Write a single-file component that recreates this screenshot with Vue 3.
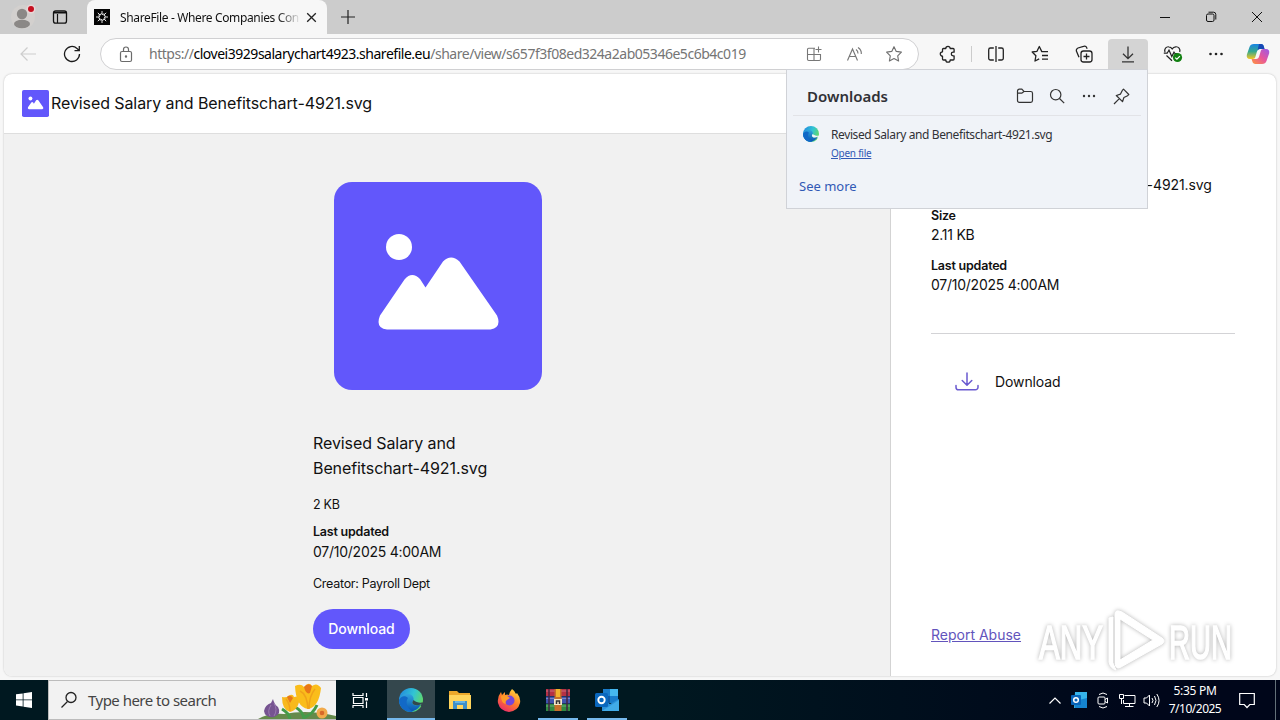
<script setup>
const fileName = 'Revised Salary and Benefitschart-4921.svg'
const updated = '07/10/2025 4:00AM'
</script>

<template>
  <div class="screen">
    <!-- Tab strip -->
    <div class="tabs">
      <div class="profile">
        <svg width="34" height="34" viewBox="0 0 34 34">
          <circle cx="17" cy="17" r="12" fill="#d3d0ce" />
          <circle cx="16" cy="14" r="5.2" fill="#8b8886" />
          <ellipse cx="16" cy="24" rx="8" ry="4.2" fill="#8b8886" />
          <circle cx="25" cy="9" r="4.500" fill="#e9d5d5" />
          <circle cx="25" cy="9" r="3" fill="#c50f1f" />
        </svg>
      </div>
      <div class="workspaces">
        <svg width="16" height="16" viewBox="0 0 16 16" fill="none" stroke="#111">
          <rect x="1.500" y="1.800" width="13" height="12.400" rx="2.200" stroke-width="1.300" />
          <path d="M2 3.500h12" stroke-width="2" />
          <path d="M5.500 5v9" stroke-width="1.200" />
        </svg>
      </div>
      <div class="tab">
        <svg width="16" height="16" viewBox="0 0 16 16">
          <rect width="16" height="16" fill="#050505" />
          <g fill="none" stroke="#fff" stroke-width=".9">
            <path d="M8 2v3.500l2.300-.6M12.200 3.800 9.800 6.200l2 1.200M14 8h-3.500l.6 2.300M12.200 12.200 9.800 9.800l-1.200 2M8 14v-3.500l-2.300.6M3.800 12.200l2.400-2.400-2-1.200M2 8h3.500l-.6-2.300M3.800 3.800l2.400 2.400 1.200-2" />
          </g>
        </svg>
        <span class="tab-title">ShareFile - Where Companies Con</span>
        <svg width="11" height="11" viewBox="0 0 11 11"><path d="M1.200 1.200l8.600 8.600M9.800 1.200 1.200 9.800" stroke="#222" stroke-width="1.300" /></svg>
      </div>
      <div class="new-tab">
        <svg width="14" height="14" viewBox="0 0 14 14"><path d="M7 0v14M0 7h14" stroke="#222" stroke-width="1.200" /></svg>
      </div>
      <div class="window-buttons">
        <div><svg width="12" height="12" viewBox="0 0 12 12"><path d="M1 6.500h10" stroke="#111" /></svg></div>
        <div>
          <svg width="12" height="12" viewBox="0 0 12 12" fill="none" stroke="#111">
            <rect x="1.500" y="3" width="7.500" height="7.500" rx="1.500" />
            <path d="M3.500 1.200h5a2.300 2.300 0 0 1 2.300 2.300v5" />
          </svg>
        </div>
        <div><svg width="12" height="12" viewBox="0 0 12 12"><path d="M1 1l10 10M11 1 1 11" stroke="#111" /></svg></div>
      </div>
    </div>

    <!-- Toolbar -->
    <div class="toolbar">
      <div class="tool">
        <svg width="18" height="18" viewBox="0 0 18 18" fill="none" stroke="#cdcdcd" stroke-width="1.200"><path d="M17 9H2M8.500 2.500 2 9l6.500 6.500" /></svg>
      </div>
      <div class="tool">
        <svg width="18" height="18" viewBox="0 0 18 18" fill="none" stroke="#1b1b1b" stroke-width="1.300"><path d="M16.500 9A7.500 7.500 0 1 1 14 3.400l1.800 1.900M16.300 1v4.600h-4.800" /></svg>
      </div>
      <div class="address">
        <svg class="lock" width="14" height="17" viewBox="0 0 14 17" fill="none" stroke="#6b6b6b" stroke-width="1.200">
          <rect x="1.500" y="5.500" width="11" height="10" rx="1.500" />
          <path d="M4.500 5.500V3.500a2.500 2.500 0 0 1 5 0v2" />
          <circle cx="7" cy="10.500" r=".6" fill="#6b6b6b" />
        </svg>
        <span class="url">https://<b>clovei3929salarychart4923.sharefile.eu</b>/share/view/s657f3f08ed324a2ab05346e5c6b4c019</span>
        <div class="address-icons">
          <div>
            <svg width="16" height="16" viewBox="0 0 16 16" fill="none" stroke="#777" stroke-width="1.100">
              <path d="M9 2.200H2.700A1.200 1.200 0 0 0 1.500 3.400v9.900a1.200 1.200 0 0 0 1.200 1.200h10.600a1.200 1.200 0 0 0 1.200-1.200V8.500h-13M8 2.200v12.300M12.500.5v6M9.500 3.500h6" />
            </svg>
          </div>
          <div>
            <svg width="17" height="16" viewBox="0 0 17 16" fill="none" stroke="#777" stroke-width="1.150">
              <path d="M1.500 14.500 6.500 3l5 11.500M3.200 10.500h6.600M10 3.500a4.500 4.500 0 0 1 2 4M12 1.500a7 7 0 0 1 3.300 6.500" />
            </svg>
          </div>
          <div>
            <svg width="18" height="18" viewBox="0 0 18 18" fill="none" stroke="#707070" stroke-width="1.150" stroke-linejoin="round">
              <path d="m9 1.700 2.250 4.700 5.150.75-3.700 3.650.9 5.200L9 13.500 4.400 16l.9-5.200L1.600 7.150l5.150-.75z" />
            </svg>
          </div>
        </div>
      </div>
      <div class="tools">
        <div class="tool">
          <svg width="18" height="18" viewBox="0 0 18 18" fill="none" stroke="#222" stroke-width="1.300" stroke-linejoin="round">
            <path d="M4.500 3.500h2.300a2.200 2.200 0 0 1 4.400 0h2.900a1 1 0 0 1 1 1v2.700h-1a1.800 1.800 0 0 0 0 3.600h1v3.200a1 1 0 0 1-1 1h-2.900a2.200 2.200 0 0 1-4.400 0H4.500a1 1 0 0 1-1-1v-2.800a2.200 2.200 0 0 1 0-4.400V4.500a1 1 0 0 1 1-1z" />
          </svg>
        </div>
        <i class="divider"></i>
        <div class="tool">
          <svg width="18" height="18" viewBox="0 0 18 18" fill="none" stroke="#222" stroke-width="1.300">
            <path d="M6.800 3H3.500A1.800 1.800 0 0 0 1.700 4.800v8.400A1.800 1.800 0 0 0 3.500 15h3.300M11.200 3h3.300a1.800 1.800 0 0 1 1.800 1.800v8.400a1.800 1.800 0 0 1-1.800 1.800h-3.300M9 1v16" />
          </svg>
        </div>
        <div class="tool">
          <svg width="18" height="18" viewBox="0 0 18 18" fill="none" stroke="#222" stroke-width="1.300" stroke-linejoin="round">
            <path d="M17 6.600h-6.200L8.300 1.500 6 6.300 1.200 7l3.700 3.700-.9 5.300 4.200-2.200M11 10.500h6M11 14.200h6" />
          </svg>
        </div>
        <div class="tool">
          <svg width="18" height="18" viewBox="0 0 18 18" fill="none" stroke="#222" stroke-width="1.300">
            <rect x="6" y="6" width="11" height="11" rx="2.500" />
            <path d="M11.500 8.500v6M8.500 11.500h6M4 12.200 1.600 6.500A2.600 2.600 0 0 1 3 3l5.500-1.700a2.600 2.600 0 0 1 3.300 1.600l.3.900" />
          </svg>
        </div>
        <div class="tool active">
          <svg width="18" height="18" viewBox="0 0 18 18" fill="none" stroke="#333" stroke-width="1.300"><path d="M9 1.500v12M4 8.700l5 5 5-5M3 16.800h12" /></svg>
        </div>
        <div class="tool heart">
          <svg width="20" height="18" viewBox="0 0 20 18" fill="none" stroke="#222" stroke-width="1.200">
            <path d="M2 7C.9 4 3.200 1.500 5.800 1.800 8 2 9.200 3.800 9.200 3.800s1.200-1.800 3.500-2c2.800-.3 4.900 2.300 4 5.200M.8 8.200h3.400L6 5l2.800 6.500L11 7.200l1 1.300h2M3.500 10.500 9 15.800" />
            <circle cx="14.500" cy="12.500" r="4.600" fill="#128112" stroke="none" />
            <path d="m12.200 12.600 1.700 1.600 3-3.100" stroke="#fff" />
          </svg>
        </div>
        <div class="tool">
          <svg width="16" height="4" viewBox="0 0 16 4" fill="#222"><circle cx="2.500" cy="2" r="1.300" /><circle cx="8" cy="2" r="1.300" /><circle cx="13.500" cy="2" r="1.300" /></svg>
        </div>
        <div class="tool copilot">
          <svg width="24" height="22" viewBox="0 0 24 22">
            <defs>
              <linearGradient id="cpA" x1="0" y1="0" x2="0" y2="1"><stop offset="0" stop-color="#1783e4" /><stop offset=".5" stop-color="#36a98d" /><stop offset="1" stop-color="#f7c620" /></linearGradient>
              <linearGradient id="cpB" x1="1" y1="0" x2="0" y2="1"><stop offset="0" stop-color="#9a5be8" /><stop offset=".5" stop-color="#e7569b" /><stop offset="1" stop-color="#ff963c" /></linearGradient>
            </defs>
            <path d="M8 1h7c1.800 0 2.400 1 2.900 2.700L18.500 6H14c-2 0-2.600 1-3.200 3l-1.300 4.600C9 15.400 8 16 6.500 16H4c-2.600 0-3.800-2-3.100-4.600L3.500 4C4.200 2 5.500 1 8 1z" fill="url(#cpA)" />
            <path d="M16 21H9.500c-1.800 0-2.700-1-3.200-2.700L5.600 16H10c2 0 2.700-1 3.300-3l1.300-4.500C15.100 6.700 16 6 17.500 6H20c2.600 0 3.800 2 3.100 4.600L20.500 18c-.7 2-2 3-4.500 3z" fill="url(#cpB)" />
            <path d="M15 1c1.800 0 2.400 1 2.900 2.700l.6 2.300h-4c-1.500 0-2.500.3-3.200 2.200L13 1z" fill="#1748b5" />
          </svg>
        </div>
      </div>
    </div>

    <!-- Web page -->
    <div class="page">
      <div class="left">
        <header class="file-header">
          <svg width="27" height="27" viewBox="0 0 208 208">
            <rect width="208" height="208" rx="14" fill="#6257fb" />
            <circle cx="65" cy="65" r="15" fill="#fff" />
            <path d="M46 133.500 70.500 97.500Q78 89 86 97l5.500 8.500L109 79.500Q117 71.500 125.500 79.500L163 133.500Q168 145 156.500 147.500H53Q41 146 46 133.500z" fill="#fff" />
          </svg>
          <span class="file-title">{{ fileName }}</span>
        </header>
        <main class="preview">
          <svg class="preview-icon" width="208" height="208" viewBox="0 0 208 208">
            <rect width="208" height="208" rx="18" fill="#6257fb" />
            <circle cx="65" cy="65" r="13" fill="#fff" />
            <path d="M46 133.500 70.500 97.500Q78 89 86 97l5.500 8.500L109 79.500Q117 71.500 125.500 79.500L163 133.500Q168 145 156.500 147.500H53Q41 146 46 133.500z" fill="#fff" />
          </svg>
          <div class="preview-name">Revised Salary and<br /><span>Benefitschart-4921.svg</span></div>
          <div class="small size">2 KB</div>
          <div class="label">Last updated</div>
          <div class="value">{{ updated }}</div>
          <div class="small creator">Creator: Payroll Dept</div>
          <button class="download">Download</button>
        </main>
      </div>
      <aside class="details">
        <div class="value name">{{ fileName }}</div>
        <div class="label">Size</div>
        <div class="value kb">2.11 KB</div>
        <div class="label">Last updated</div>
        <div class="value">{{ updated }}</div>
        <hr />
        <div class="action">
          <svg width="24" height="19" viewBox="0 0 24 19" fill="none" stroke="#6a5ad0" stroke-width="1.500" stroke-linecap="round" stroke-linejoin="round">
            <path d="M12 1v12M7.200 8.500 12 13.200l4.800-4.700M1 13.500v1.700a2.600 2.600 0 0 0 2.600 2.600h16.800a2.600 2.600 0 0 0 2.600-2.600v-1.700" />
          </svg>
          <span>Download</span>
        </div>
        <a class="report">Report Abuse</a>
      </aside>
    </div>

    <!-- Downloads flyout -->
    <div class="flyout">
      <div class="flyout-head">
        <span>Downloads</span>
        <div class="flyout-icons">
          <div><svg width="18" height="16" viewBox="0 0 18 16" fill="none" stroke="#333" stroke-width="1.200"><path d="M1.500 4.500V3A1.800 1.800 0 0 1 3.300 1.200h2.500L8 3.500h6.700a1.800 1.800 0 0 1 1.800 1.800v7.200a1.800 1.800 0 0 1-1.800 1.800H3.300a1.800 1.800 0 0 1-1.800-1.800zM1.500 5.200h4.300L8 3.500" /></svg></div>
          <div><svg width="16" height="16" viewBox="0 0 16 16" fill="none" stroke="#333" stroke-width="1.200"><circle cx="6.700" cy="6.700" r="5.200" /><path d="m10.500 10.500 4.700 4.700" /></svg></div>
          <div><svg width="14" height="4" viewBox="0 0 14 4" fill="#333"><circle cx="2" cy="2" r="1.200" /><circle cx="7" cy="2" r="1.200" /><circle cx="12" cy="2" r="1.200" /></svg></div>
          <div><svg width="17" height="17" viewBox="0 0 17 17" fill="none" stroke="#333" stroke-width="1.200" stroke-linejoin="round"><path d="m10.500 1.200 5.300 5.300-1.200 1.200-3.700 1.800-1.400 4.200-6.200-6.200 4.200-1.400 1.800-3.700zM6.300 10.700 1 16" /></svg></div>
        </div>
      </div>
      <div class="download-item">
        <svg width="16" height="16" viewBox="0 0 24 24">
          <circle cx="12" cy="12" r="12" fill="url(#edgeA)" />
          <path d="M0 12C1 7 6 5 10 6c4 .8 5 4 4.500 6-1 2-2 3 0 4.500 2 1.300 5 1 7.500-.2C19 23 10 26 4 21c-3-3-4-6-4-9z" fill="url(#edgeB)" />
          <path d="M9 10c-3 4-1 11 5 13.700C7 25 0 19 0 12c2-4 6-5 9-2z" fill="#1269c7" />
          <path d="M14.500 12c-1 2-2 3 0 4.500 2.200 1.400 5.500.8 8-.8l-1 2.300 2 1 1-5c-3 1.500-7 .5-10-2z" fill="#f0f3f8" />
        </svg>
        <div>
          <div class="item-name">{{ fileName }}</div>
          <a class="open">Open file</a>
        </div>
      </div>
      <a class="more">See more</a>
    </div>

    <!-- Watermark -->
    <svg class="watermark" width="220" height="68" viewBox="0 0 220 68">
      <g fill="#fff" stroke="#fff">
        <g font-family="Liberation Sans" font-size="49" stroke-width="1.600">
          <text x="4" y="51" textLength="64" lengthAdjust="spacingAndGlyphs">ANY</text>
          <text x="134" y="51" textLength="63" lengthAdjust="spacingAndGlyphs">RUN</text>
        </g>
        <path d="M84 3q-4-1-4 4v49q1 6 6 3l41-23q4-3 0-6L87 4zM85 11l33 21-33 20z" fill-rule="evenodd" />
        <path d="M74 10v44q1 6 7 8l-3-7V9z" />
      </g>
    </svg>

    <!-- Taskbar -->
    <div class="taskbar">
      <div class="start">
        <svg width="16" height="16" viewBox="0 0 16 16" fill="#fff"><path d="M0 2.300 6.700 1.400v6.100H0zM7.500 1.200 16 0v7.500H7.500zM0 8.300h6.700v6.200L0 13.600zM7.500 8.300H16V16l-8.500-1.200z" /></svg>
      </div>
      <div class="search">
        <svg width="18" height="18" viewBox="0 0 18 18" fill="none" stroke="#222" stroke-width="1.300"><circle cx="11" cy="6.500" r="5" /><path d="M7.500 10.500 1.500 16.500" /></svg>
        <span>Type here to search</span>
        <svg class="flowers" width="78" height="38" viewBox="0 0 78 38">
          <path d="M0 38Q10 32 26 33 50 28 78 35v3z" fill="#658a4b" />
          <path d="M32 38Q31 32 24 28M46 38q-1-8-9-12M47 36q8-3 12-12" stroke="#449b48" stroke-width="3" fill="none" />
          <path d="M15 18q1 5 5 8 4 7-4 10-9 1-10-6 1-6 7-8z" fill="#765391" />
          <path d="M13 24q-4 6-1 11M16 22q4 7 0 13" stroke="#9a7ab0" fill="none" />
          <path d="M24 16q5 1 6-1 5-3 6 1l6-1q-1 14-10 16-8-2-8-15z" fill="#f8b91d" />
          <path d="M37 5q6-3 9 1 5-6 8-1 5-4 9 2-2 19-13 21-12-2-13-23z" fill="#fabd1b" />
          <path d="M42 10q7 3 8 18M57 8q-6 7-6 20M28 18q4 5 4 12" stroke="#f0a21a" stroke-width="1.500" fill="none" />
          <path d="M46 6q4-5 8-1l-2 7q-4 2-6-6zM29 16q3-3 6 1l-3 5z" fill="#e87719" />
          <circle cx="64" cy="32" r="5.500" fill="#f2aa4b" /><circle cx="64" cy="32" r="2.300" fill="#d7682a" />
        </svg>
      </div>
      <div class="task-icon">
        <svg width="17" height="17" viewBox="0 0 17 17" fill="none" stroke="#fff" stroke-width="1.200"><path d="M1 1v2.500h10V1M1 16v-2.500h10V16M1.500 5.500h9.500v6H1.500zM14.500 1v4M14.500 9.500V16" /><path d="M13 7.300h3" stroke-width="2.500" /></svg>
      </div>
      <div class="task-icon current">
        <svg width="24" height="24" viewBox="0 0 24 24">
          <defs>
            <linearGradient id="edgeA" x1="0" y1=".3" x2="1" y2=".7"><stop offset="0" stop-color="#238ddd" /><stop offset=".5" stop-color="#31c4d4" /><stop offset="1" stop-color="#69dc58" /></linearGradient>
            <linearGradient id="edgeB" x1="0" y1="0" x2="0" y2="1"><stop offset="0" stop-color="#31a5df" /><stop offset="1" stop-color="#0754b1" /></linearGradient>
          </defs>
          <circle cx="12" cy="12" r="12" fill="url(#edgeA)" />
          <path d="M0 12C1 7 6 5 10 6c4 .8 5 4 4.500 6-1 2-2 3 0 4.500 2 1.300 5 1 7.500-.2C19 23 10 26 4 21c-3-3-4-6-4-9z" fill="url(#edgeB)" />
          <path d="M9 10c-3 4-1 11 5 13.700C7 25 0 19 0 12c2-4 6-5 9-2z" fill="#1269c7" />
          <path d="M14.500 12c-1 2-2 3 0 4.500 2.200 1.400 5.500.8 8-.8l-1 2.300 2 1 1-5c-3 1.500-7 .5-10-2z" fill="#34474d" />
        </svg>
      </div>
      <div class="task-icon">
        <svg width="22" height="20" viewBox="0 0 22 20">
          <path d="M0 1h8l2 2h11v16H0z" fill="#eca82b" /><path d="M0 5h22v14H0z" fill="#ffd45c" />
          <path d="M4 11h14v8h-4v-4H8v4H4z" fill="#3d8fc9" /><path d="M6 11h10v2H6z" fill="#65b4e5" />
        </svg>
      </div>
      <div class="task-icon">
        <svg width="24" height="24" viewBox="0 0 24 24">
          <defs><linearGradient id="fox" x1=".8" y1="0" x2=".2" y2="1"><stop offset="0" stop-color="#ffd83d" /><stop offset=".5" stop-color="#ff7b29" /><stop offset="1" stop-color="#e92471" /></linearGradient></defs>
          <path d="M15 1q3 2 4 5l1-1q4 5 3 10-2 8-11 9Q3 23 1 15q-1-6 3-11l1 3 3-3v3q2-1 4 0 1-4 3-6z" fill="url(#fox)" />
          <circle cx="12.500" cy="12.500" r="5" fill="#7546d9" />
          <path d="M4 8q5-2 9 2l-3 2q-2 1-1 4-5-1-5-8z" fill="#ff9a27" />
        </svg>
      </div>
      <div class="task-icon running">
        <svg width="24" height="24" viewBox="0 0 24 24">
          <path d="M0 1h24v7H0z" fill="#b53145" /><path d="M0 8.500h24v7H0z" fill="#4054ad" /><path d="M0 16h24v7H0z" fill="#2f8941" />
          <path d="M0 3h24M0 10.500h24M0 18h24" stroke="#fff" stroke-opacity=".3" />
          <path d="M3 1v22M21 1v22" stroke="#422340" stroke-width="1.500" />
          <path d="M8.500 1h7v22h-7z" fill="#c66f2b" /><path d="M10 1h4v8h-4z" fill="#f2b22e" />
          <rect x="8" y="11" width="8" height="6" fill="#f4e6c7" /><path d="M10.500 16v-3h3v3" stroke="#333" stroke-width="1.500" fill="none" />
        </svg>
      </div>
      <div class="task-icon running">
        <svg width="24" height="22" viewBox="0 0 24 22">
          <path d="M8 0h15v14H8z" fill="#197ccb" /><path d="M15 0h8v7h-8z" fill="#45b7ee" /><path d="M8 7h7v7H8z" fill="#0e5ba8" />
          <path d="M7 10l8 5 9-5v12H7z" fill="#2b91da" /><path d="M7 22 24 11v11z" fill="#41abe8" />
          <rect y="4" width="13" height="14" rx="1.500" fill="#0a67bd" /><circle cx="6.500" cy="11" r="3.200" fill="none" stroke="#fff" stroke-width="1.900" />
        </svg>
      </div>
      <div class="tray">
        <div class="tray-icon"><svg width="14" height="9" viewBox="0 0 14 9"><path d="m1.500 7.500 5.500-5.500 5.500 5.500" fill="none" stroke="#fff" stroke-width="1.200" /></svg></div>
        <div class="tray-icon">
          <svg width="16" height="16" viewBox="0 0 16 16"><path d="M4 0h12v16H3z" fill="#36b4ea" /><path d="M4 9 16 6v10H4z" fill="#1584cf" /><rect y="3" width="10" height="10" rx="1" fill="#0864b8" /><circle cx="5" cy="8" r="2.300" fill="none" stroke="#fff" stroke-width="1.500" /></svg>
        </div>
        <div class="tray-icon"><svg width="12" height="17" viewBox="0 0 12 17" fill="none" stroke="#fff"><rect x="1" y="5" width="7" height="7" rx="1" /><path d="m8 7.500 2.500-1.500v5L8 9.500M2 2.500Q6-.5 10 2.500M2 14.500q4 3 8 0" /></svg></div>
        <div class="tray-icon"><svg width="17" height="15" viewBox="0 0 17 15" fill="none" stroke="#fff"><path d="M5.500 2.500h10.500v8H4.500V7M10.500 10.500v3M6 13.500h8.500M.5 1.500h4v4h-4zM2.500 5.500v5.500" /></svg></div>
        <div class="tray-icon"><svg width="17" height="15" viewBox="0 0 17 15" fill="none" stroke="#fff"><path d="M1 5h2.500L6.500 2v11l-3-3H1zM9 5q2 2.500 0 5M11.500 3q3 4.500 0 9M13.800 1q4.500 6.500 0 13" /></svg></div>
        <div class="clock"><span>5:35 PM</span><span>7/10/2025</span></div>
        <div class="notice"><svg width="16" height="17" viewBox="0 0 16 17" fill="none" stroke="#fff" stroke-width="1.200"><path d="M.7 1.500h14.600v11h-4.500L8 15.500l-2.800-3H.7z" /></svg></div>
      </div>
    </div>
  </div>
</template>

<style>
body {
  margin: 0;
  overflow: hidden;
}
</style>

<style scoped>
* {
  box-sizing: border-box;
}

.screen {
  position: relative;
  display: flex;
  flex-direction: column;
  width: 1280px;
  height: 720px;
  background: #f7f7f7;
  color: #111;
  font-family: "Noto Sans", sans-serif;
}

svg {
  display: block;
  flex: none;
}

.tabs {
  display: flex;
  height: 34px;
  background: #ccc;
}

.profile {
  padding-left: 6px;
  width: 40px;
}

.workspaces {
  display: flex;
  align-items: center;
  justify-content: center;
  width: 40px;
}

.tab {
  display: flex;
  align-items: center;
  width: 240px;
  margin-left: 7px;
  padding: 0 10px 0 7px;
  border-radius: 8px 8px 0 0;
  background: #f7f7f7;
}

.tab-title {
  width: 180px;
  margin: 0 6px 0 10px;
  white-space: nowrap;
  font-size: 12px;
  letter-spacing: -0.36px;
  mask-image: linear-gradient(90deg, #000 158px, transparent 181px);
}

.new-tab {
  display: flex;
  align-items: center;
  margin-left: 14px;
}

.window-buttons {
  display: flex;
  margin-left: auto;
}

.window-buttons div {
  display: flex;
  align-items: center;
  justify-content: center;
  width: 46px;
}

.toolbar {
  display: flex;
  height: 40px;
  padding: 4px 0 5px 6px;
}

.tool {
  display: flex;
  align-items: center;
  justify-content: center;
  width: 44px;
  height: 31px;
}

.address {
  display: flex;
  align-items: center;
  width: 819px;
  height: 32px;
  margin-left: 6px;
  padding-left: 18px;
  border: 1px solid #d0d0d2;
  border-radius: 16px;
  background: #fff;
}

.url {
  margin: 0 0 2px 16px;
  white-space: nowrap;
  color: #757575;
  font-size: 14px;
  letter-spacing: -0.475px;
}

.url b {
  color: #000;
  font-weight: 400;
}

.address-icons {
  display: flex;
  margin: 0 4px 0 auto;
}

.address-icons div {
  display: flex;
  align-items: center;
  justify-content: center;
  width: 40px;
}

.tools {
  display: flex;
  align-items: center;
  margin-left: 7px;
}

.divider {
  width: 1px;
  height: 16px;
  margin: 0 2px 0 1px;
  background: #ccc;
}

.active {
  width: 40px;
  margin: 1px 2px 0;
  border-radius: 4px 4px 0 0;
  background: #d4d4d4;
}

.heart {
  padding-left: 2px;
}

.copilot {
  width: 40px;
}

.page {
  display: flex;
  width: 1272px;
  height: 602px;
  margin-left: 4px;
  overflow: hidden;
  border-radius: 8px;
  background: #fff;
  box-shadow: 0 0 2px rgba(0, 0, 0, 0.25);
  font-family: Inter, sans-serif;
}

.left {
  width: 886px;
}

.file-header {
  display: flex;
  align-items: center;
  height: 60px;
  padding-left: 18px;
  border-bottom: 1px solid #dedede;
}

.file-title {
  margin: 0 0 2px 2px;
  font-size: 16px;
  letter-spacing: -0.09px;
}

.preview {
  height: 542px;
  padding: 48px 0 0 309px;
  background: #f1f1f1;
}

.preview-icon {
  margin-left: 21px;
}

.preview-name {
  margin-top: 41px;
  font-size: 16px;
  line-height: 25px;
  letter-spacing: -0.09px;
}

.small {
  font-size: 12.5px;
  line-height: 20px;
  letter-spacing: -0.28px;
}

.size {
  margin: 14px 0 7px;
}

.label {
  font-size: 12.5px;
  font-weight: 600;
  line-height: 20px;
  letter-spacing: -0.22px;
}

.value {
  font-size: 14px;
  line-height: 20px;
  letter-spacing: -0.25px;
}

.creator {
  margin: 12px 0 15px;
}

.download {
  display: block;
  width: 97px;
  height: 40px;
  padding: 0 0 1px;
  border: 0;
  border-radius: 20px;
  background: #6257fb;
  color: #fff;
  font-family: inherit;
  font-size: 14px;
  font-weight: 500;
  letter-spacing: -0.1px;
}

.details {
  display: flex;
  flex-direction: column;
  width: 386px;
  padding: 101px 41px 0 40px;
  border-left: 1px solid #d3d3d3;
}

.name {
  margin-bottom: 11px;
  letter-spacing: -0.08px;
}

.label + .kb {
  margin: -1px 0 11px;
}

.details .label + .value:not(.kb) {
  margin: -1px 0 1px;
}

hr {
  width: 304px;
  height: 1px;
  margin: 37px 0;
  border: 0;
  background: #d3d3d6;
}

.action {
  display: flex;
  align-items: center;
  gap: 16px;
  height: 20px;
  padding-left: 24px;
  font-size: 14px;
  letter-spacing: -0.1px;
}

.report {
  margin-top: 234px;
  color: #6254bc;
  font-size: 14px;
  line-height: 20px;
  text-decoration: underline;
}

.flyout {
  position: absolute;
  left: 786px;
  top: 69px;
  width: 362px;
  height: 140px;
  border: 1px solid #d0d2d7;
  background: #f0f3f8;
}

.flyout-head {
  display: flex;
  align-items: center;
  justify-content: space-between;
  height: 46px;
  margin: 0 6px;
  padding: 7px 4px 0 14px;
  border-bottom: 1px solid #e2e3e7;
  color: #303136;
  font-size: 15px;
  font-weight: 600;
}

.flyout-icons {
  display: flex;
}

.flyout-icons div {
  display: flex;
  align-items: center;
  justify-content: center;
  width: 32px;
}

.download-item {
  display: flex;
  gap: 12px;
  padding: 10px 0 0 16px;
}

.item-name {
  color: #303136;
  font-size: 12px;
  line-height: 18px;
  letter-spacing: -0.39px;
}

.open {
  display: block;
  color: #3159b5;
  font-size: 10px;
  line-height: 18px;
  letter-spacing: -0.25px;
  text-decoration: underline;
}

.more {
  display: block;
  margin: 14px 0 0 12px;
  color: #3159b5;
  font-size: 13px;
  line-height: 20px;
}

.watermark {
  position: absolute;
  left: 1035px;
  top: 608px;
  filter: drop-shadow(0 0 2px rgba(0, 0, 0, 0.3));
}

.taskbar {
  display: flex;
  height: 40px;
  margin-top: 4px;
  background: linear-gradient(90deg, #001820 0, #001820 650px, #00061a 1150px);
  color: #fff;
}

.start {
  display: flex;
  align-items: center;
  justify-content: center;
  width: 48px;
}

.search {
  display: flex;
  align-items: center;
  width: 288px;
  padding-left: 11px;
  border: 1px solid #bcbcbc;
  border-right: 0;
  background: #f2f2f2;
  color: #444;
  font-size: 15px;
  letter-spacing: -0.52px;
}

.search span {
  margin-left: 10px;
  white-space: nowrap;
}

.flowers {
  margin-left: auto;
}

.task-icon {
  display: flex;
  align-items: center;
  justify-content: center;
  width: 48px;
  margin-right: 1px;
}

.search + .task-icon {
  margin-right: 3px;
}

.current {
  border-bottom: 2px solid #76b9ed;
  background: #34474d;
  padding-top: 2px;
}

.running {
  background: linear-gradient(#76b9ed, #76b9ed) center bottom / 40px 2px no-repeat;
}

.tray {
  display: flex;
  margin-left: auto;
}

.tray-icon {
  display: flex;
  align-items: center;
  justify-content: center;
  width: 24px;
}

.clock {
  display: flex;
  flex-direction: column;
  align-items: center;
  width: 64px;
  padding-top: 2px;
  font-size: 12px;
  line-height: 18px;
  letter-spacing: -0.5px;
}

.clock span:first-child {
  letter-spacing: -0.3px;
}

.notice {
  display: flex;
  align-items: center;
  width: 49px;
  margin-right: 4px;
  padding-left: 12px;
  border-right: 1px solid #637079;
}
</style>
